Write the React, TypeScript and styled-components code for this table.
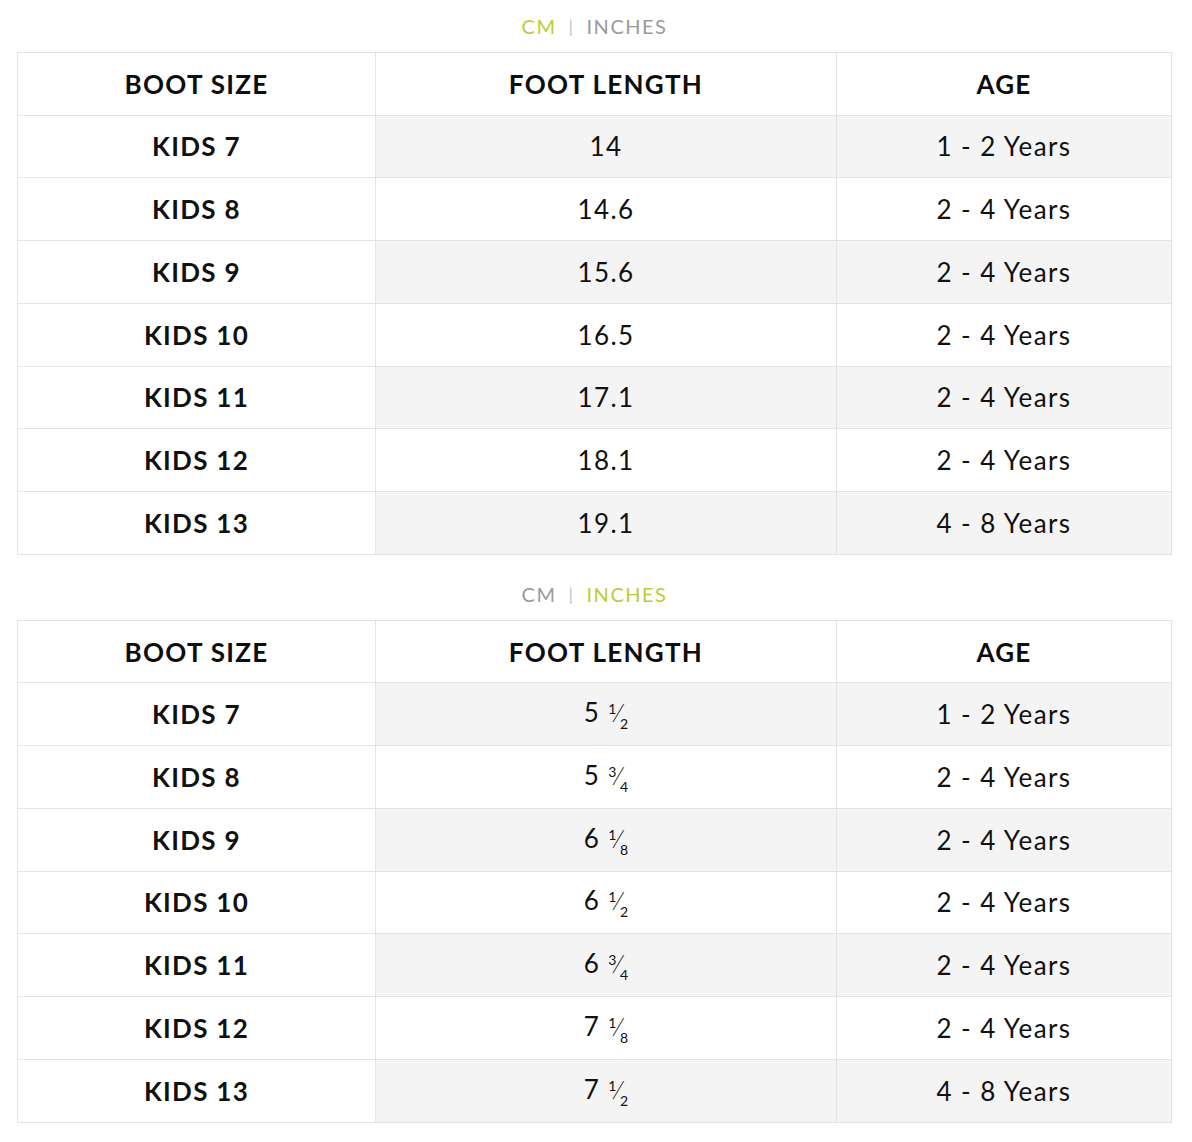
import React from "react";
import styled, { createGlobalStyle } from "styled-components";

const GlobalStyle = createGlobalStyle`
  html, body { margin: 0; padding: 0; background: #ffffff; }
  body { font-family: "Lato", "Noto Sans", sans-serif; color: #111111; }
`;

const Page = styled.div`
  display: flex;
  flex-direction: column;
  gap: 13px;
  padding: 0 20px 20px 17px;
`;

const Section = styled.section`
  display: flex;
  flex-direction: column;
  padding-top: 15px;
`;

const Toggle = styled.div`
  display: flex;
  justify-content: center;
  align-items: center;
  gap: 12px;
  height: 22px;
  margin-bottom: 15px;
  font-size: 20px;
  letter-spacing: 1.5px;
`;

const UnitLabel = styled.span<{ $active: boolean }>`
  color: ${(p) => (p.$active ? "#b6cf3a" : "#9a9a9a")};
`;

const Divider = styled.span`
  color: #c4c4c4;
  font-size: 18px;
`;

const Table = styled.table`
  width: 100%;
  border-collapse: collapse;
  table-layout: fixed;
`;

const HeadCell = styled.th`
  height: 61.5px;
  padding: 0;
  border: 1px solid #e4e4e4;
  font-size: 26px;
  font-weight: 700;
  letter-spacing: 1.3px;
  text-align: center;
  vertical-align: middle;
  color: #0d0d0d;
`;

const Cell = styled.td<{ $striped: boolean; $label?: boolean }>`
  height: 61.75px;
  padding: 0;
  border: 1px solid #e4e4e4;
  background: ${(p) => (p.$striped && !p.$label ? "#f4f4f4" : "#ffffff")};
  font-size: 26px;
  font-weight: ${(p) => (p.$label ? 700 : 400)};
  letter-spacing: ${(p) => (p.$label ? "1.3px" : "1.4px")};
  text-align: center;
  vertical-align: middle;
  color: #111111;
`;

const Whole = styled.span`
  margin-right: 8px;
`;

const Num = styled.sup`
  font-size: 14px;
  letter-spacing: 0;
  vertical-align: 8px;
`;

const Slash = styled.span`
  font-size: 26px;
  font-weight: 300;
  letter-spacing: 0;
`;

const Den = styled.sub`
  font-size: 14px;
  letter-spacing: 0;
  vertical-align: -7px;
`;

type Row = { size: string; cm: string; inch: [string, string, string]; age: string };

const rows: Row[] = [
  { size: "KIDS 7", cm: "14", inch: ["5", "1", "2"], age: "1 - 2 Years" },
  { size: "KIDS 8", cm: "14.6", inch: ["5", "3", "4"], age: "2 - 4 Years" },
  { size: "KIDS 9", cm: "15.6", inch: ["6", "1", "8"], age: "2 - 4 Years" },
  { size: "KIDS 10", cm: "16.5", inch: ["6", "1", "2"], age: "2 - 4 Years" },
  { size: "KIDS 11", cm: "17.1", inch: ["6", "3", "4"], age: "2 - 4 Years" },
  { size: "KIDS 12", cm: "18.1", inch: ["7", "1", "8"], age: "2 - 4 Years" },
  { size: "KIDS 13", cm: "19.1", inch: ["7", "1", "2"], age: "4 - 8 Years" },
];

const Fraction: React.FC<{ parts: [string, string, string] }> = ({ parts }) => (
  <>
    <Whole>{parts[0]}</Whole>
    <Num>{parts[1]}</Num>
    <Slash>⁄</Slash>
    <Den>{parts[2]}</Den>
  </>
);

const SizeTable: React.FC<{ unit: "cm" | "in" }> = ({ unit }) => (
  <Section>
    <Toggle>
      <UnitLabel $active={unit === "cm"}>CM</UnitLabel>
      <Divider>|</Divider>
      <UnitLabel $active={unit === "in"}>INCHES</UnitLabel>
    </Toggle>
    <Table>
      <colgroup>
        <col style={{ width: "358px" }} />
        <col style={{ width: "461px" }} />
        <col />
      </colgroup>
      <thead>
        <tr>
          <HeadCell>BOOT SIZE</HeadCell>
          <HeadCell>FOOT LENGTH</HeadCell>
          <HeadCell>AGE</HeadCell>
        </tr>
      </thead>
      <tbody>
        {rows.map((r, i) => (
          <tr key={r.size}>
            <Cell $striped={i % 2 === 0} $label>
              {r.size}
            </Cell>
            <Cell $striped={i % 2 === 0}>
              {unit === "cm" ? r.cm : <Fraction parts={r.inch} />}
            </Cell>
            <Cell $striped={i % 2 === 0}>{r.age}</Cell>
          </tr>
        ))}
      </tbody>
    </Table>
  </Section>
);

export default function App() {
  return (
    <>
      <GlobalStyle />
      <Page>
        <SizeTable unit="cm" />
        <SizeTable unit="in" />
      </Page>
    </>
  );
}
